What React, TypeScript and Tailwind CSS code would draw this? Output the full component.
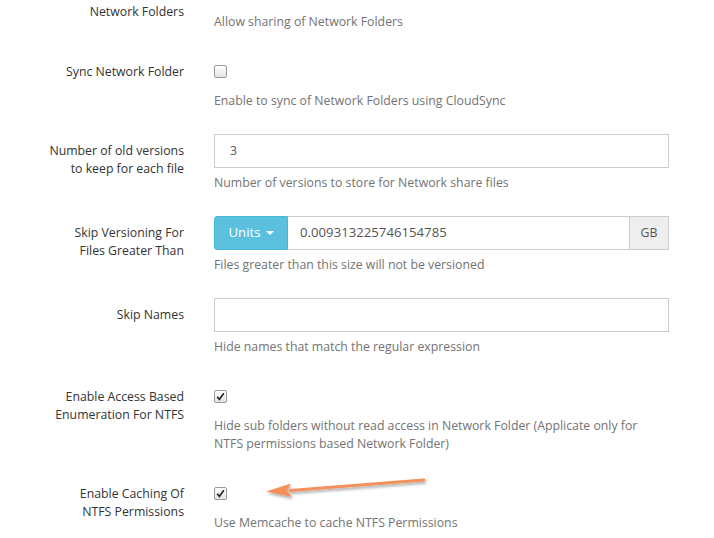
import React from "react";

const font = { fontFamily: '"Open Sans", "Noto Sans", sans-serif' };

function Checkbox({ checked }: { checked?: boolean }) {
  return (
    <div className="w-[13px] h-[13px] rounded-[2px] border border-[#9a9a9a] bg-gradient-to-b from-white to-[#e3e3e3] flex items-center justify-center">
      {checked && (
        <svg width="9" height="9" viewBox="0 0 9 9">
          <path d="M1.2 4.8 L3.4 7.4 L7.8 1.2" fill="none" stroke="#222" strokeWidth="1.7" />
        </svg>
      )}
    </div>
  );
}

function Help({ children }: { children: React.ReactNode }) {
  return <div className="mt-[6px] text-[#737373] leading-[18px]">{children}</div>;
}

function Row({
  label,
  children,
}: {
  label: React.ReactNode;
  children: React.ReactNode;
}) {
  return (
    <div className="flex pb-[24px]">
      <div className="w-[184px] shrink-0 text-right pt-[8px] leading-[18px] text-[#333]">{label}</div>
      <div className="ml-[30px] w-[455px]">{children}</div>
    </div>
  );
}

function CheckRow({ label, checked, help }: { label: React.ReactNode; checked?: boolean; help: React.ReactNode }) {
  return (
    <Row label={label}>
      <div className="h-[31px] pt-[10px]">
        <Checkbox checked={checked} />
      </div>
      <Help>{help}</Help>
    </Row>
  );
}

export default function App() {
  return (
    <div className="relative w-[714px] h-[538px] overflow-hidden bg-white text-[12.3px]" style={font}>
      <div className="flex pb-[24px]">
        <div className="w-[184px] shrink-0 text-right pt-[3px] leading-[18px] text-[#333]">Network Folders</div>
        <div className="ml-[30px] w-[455px] pt-[7px]">
          <Help>Allow sharing of Network Folders</Help>
        </div>
      </div>

      <CheckRow label="Sync Network Folder" help="Enable to sync of Network Folders using CloudSync" />

      <Row
        label={
          <>
            Number of old versions
            <br />
            to keep for each file
          </>
        }
      >
        <div className="h-[34px] border border-[#ccc] px-[15px] flex items-center text-[#555]">3</div>
        <Help>Number of versions to store for Network share files</Help>
      </Row>

      <Row
        label={
          <>
            Skip Versioning For
            <br />
            Files Greater Than
          </>
        }
      >
        <div className="flex h-[34px]">
          <div className="w-[74px] bg-[#5bc0de] border border-[#46b8da] rounded-l-[3px] text-white flex items-center justify-center text-[13.2px]">
            Units
            <span className="ml-[5px] border-x-[4px] border-x-transparent border-t-[4px] border-t-white" />
          </div>
          <div className="flex-1 border-y border-[#ccc] px-[12px] flex items-center text-[#555] text-[13.2px]">
            0.009313225746154785
          </div>
          <div className="w-[40px] bg-[#eee] border border-[#ccc] flex items-center justify-center text-[#555]">GB</div>
        </div>
        <Help>Files greater than this size will not be versioned</Help>
      </Row>

      <Row label="Skip Names">
        <div className="h-[34px] border border-[#ccc]" />
        <Help>Hide names that match the regular expression</Help>
      </Row>

      <CheckRow
        label={
          <>
            Enable Access Based
            <br />
            Enumeration For NTFS
          </>
        }
        checked
        help="Hide sub folders without read access in Network Folder (Applicate only for NTFS permissions based Network Folder)"
      />

      <CheckRow
        label={
          <>
            Enable Caching Of
            <br />
            NTFS Permissions
          </>
        }
        checked
        help="Use Memcache to cache NTFS Permissions"
      />

      <svg className="absolute left-[260px] top-[472px]" width="175" height="32" viewBox="0 0 175 32">
        <defs>
          <filter id="sh" x="-10%" y="-50%" width="120%" height="200%">
            <feDropShadow dx="1" dy="2" stdDeviation="1.5" floodColor="#000" floodOpacity="0.35" />
          </filter>
        </defs>
        <g filter="url(#sh)">
          <path d="M164 8 L30 18.5" stroke="#f4915a" strokeWidth="3" strokeLinecap="round" fill="none" />
          <path d="M6 19.5 L31 11.5 L27 18.8 L32 25 Z" fill="#f4915a" />
        </g>
      </svg>
    </div>
  );
}
